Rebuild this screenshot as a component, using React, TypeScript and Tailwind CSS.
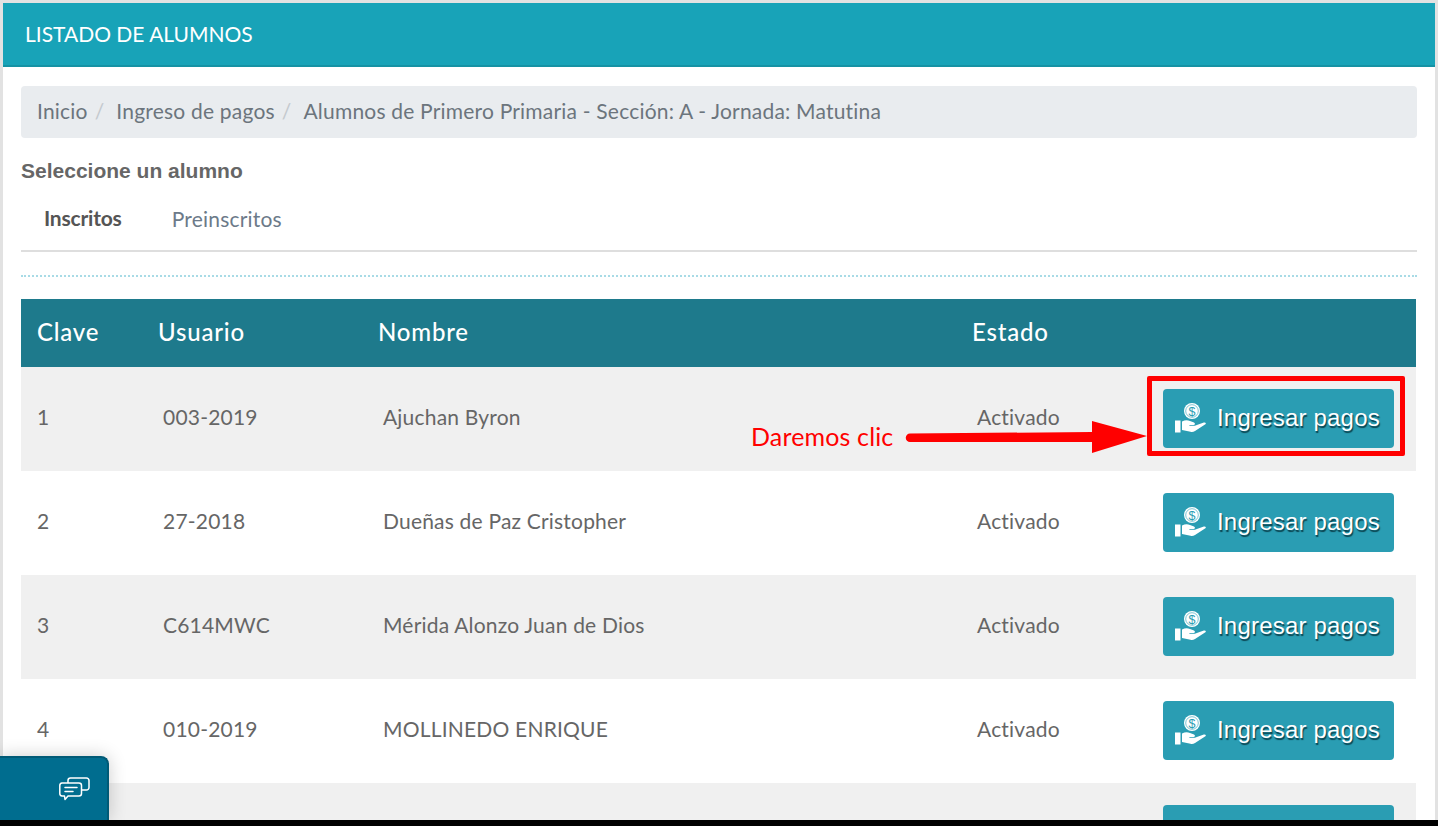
const rows = [
  { id: 1, user: "003-2019", name: "Ajuchan Byron", shaded: true },
  { id: 2, user: "27-2018", name: "Dueñas de Paz Cristopher", shaded: false },
  { id: 3, user: "C614MWC", name: "Mérida Alonzo Juan de Dios", shaded: true },
  { id: 4, user: "010-2019", name: "MOLLINEDO ENRIQUE", shaded: false },
  { id: 5, user: "", name: "", shaded: true },
]

function PayIcon() {
  return (
    <svg width="32" height="32" viewBox="0 0 32 32" className="shrink-0 [text-shadow:none]">
      <circle cx="17" cy="9" r="8" fill="#fff" />
      <circle cx="17" cy="9" r="6.300" fill="none" stroke="#2a9db3" strokeWidth="0.600" />
      <text x="17" y="13.500" textAnchor="middle" fontSize="12.500" fontFamily="Liberation Sans, sans-serif" fill="#2a9db3">$</text>
      <path d="M0 18.500h5.500v12H0z" fill="#fff" />
      <path d="M7 19.500c3-1.500 5.500-1.500 8-.5l4 1.500c1.500.6 1.200 2.500-.5 2.500h-4l-.2.8h5.500l9-3.300c2-.5 2.800 1 1.200 2l-10 6.500c-1.500 1-3 1.200-4.500.8L7 28z" fill="#fff" />
    </svg>
  )
}

function ChatIcon() {
  return (
    <svg width="32" height="28" viewBox="0 0 32 28" fill="none" stroke="#fff" strokeWidth="1.500" strokeLinejoin="round" strokeLinecap="round">
      <path d="M3 6h17a2.500 2.500 0 0 1 2.500 2.500v8a2.500 2.500 0 0 1-2.500 2.500H9l-3 3.500-.5-3.500H3A2.500 2.500 0 0 1 .800 16.500v-8A2.500 2.500 0 0 1 3 6z" />
      <path d="M9 5.500V3.500A2.500 2.500 0 0 1 11.500 1h16A2.500 2.500 0 0 1 30 3.500v7a2.500 2.500 0 0 1-2.500 2.500H23" />
      <path d="M6 10.500h12M6 14.500h8" />
    </svg>
  )
}

function PayButton({ label = true }: { label?: boolean }) {
  return (
    <button className="flex h-[59px] w-[231px] shrink-0 items-center gap-[10px] rounded-[4px] bg-[#2a9db3] pl-[12px] font-['Liberation_Sans',sans-serif] text-[24px] text-white [text-shadow:1px_2px_1px_#0b4450]">
      {label && <PayIcon />}
      {label && "Ingresar pagos"}
    </button>
  )
}

export default function App() {
  return (
    <div className="relative flex h-[826px] w-[1438px] flex-col overflow-hidden bg-[#e2e2e2] font-['Lato',sans-serif]">
      <div className="mx-[3px] mt-[3px] flex-1 overflow-hidden bg-white">
        <div className="flex h-[64px] items-center border-b-2 border-[#1592a4] bg-[#18a3b8] pl-[22px] text-[21px] text-white">
          LISTADO DE ALUMNOS
        </div>

        <div className="px-[18px] pt-[19px]">
          <div className="flex h-[52px] items-center rounded-[4px] bg-[#e9ecef] pb-[3px] pl-4 text-[21px] tracking-[0.2px] text-[#6c757d]">
            <span>Inicio</span>
            <span className="ml-[7px] text-[#c4c9ce]">/</span>
            <span className="ml-[12px]">Ingreso de pagos</span>
            <span className="ml-[7px] text-[#c4c9ce]">/</span>
            <span className="ml-[12px]">Alumnos de Primero Primaria - Sección: A - Jornada: Matutina</span>
          </div>

          <h2 className="mt-[21px] h-[24px] font-['Liberation_Sans',sans-serif] text-[21px] leading-[24px] font-bold text-[#666]">
            Seleccione un alumno
          </h2>

          <div className="flex h-[69px] items-start border-b-2 border-[#dedede] pl-[23px] pt-[19px] text-[21px]">
            <span className="font-bold tracking-[-0.2px] text-[#555]">Inscritos</span>
            <span className="ml-[50px] pt-[1px] tracking-[0.2px] text-[#6c7a89]">Preinscritos</span>
          </div>

          <div className="mt-[23px] border-t-2 border-dotted border-[#a8dbe6]" />

          <div className="mt-[22px] mr-px">
            <div className="grid h-[68px] grid-cols-[121px_220px_594px_1fr] items-center bg-[#1e7a8c] pb-[2px] text-[24px] font-medium tracking-[0.8px] text-white">
              <span className="pl-4">Clave</span>
              <span className="pl-4">Usuario</span>
              <span className="pl-4">Nombre</span>
              <span className="pl-4">Estado</span>
            </div>
            {rows.map((row) => (
              <div
                key={row.id}
                className={`grid h-[104px] grid-cols-[121px_220px_594px_1fr] items-center pb-[2px] text-[21px] tracking-[0.2px] text-[#666] ${row.shaded ? "bg-[#f0f0f0]" : "bg-white"}`}
              >
                {row.user ? (
                  <>
                    <span className="pb-[2px] pl-4">{row.id}</span>
                    <span className="pb-[2px] pl-[21px]">{row.user}</span>
                    <span className="pb-[2px] pl-[21px]">{row.name}</span>
                    <div className="flex items-center justify-between pl-[21px] pr-[22px]">
                      <span className="pb-[2px]">Activado</span>
                      <PayButton />
                    </div>
                  </>
                ) : (
                  <div className="col-start-4 flex justify-end pr-[22px]">
                    <PayButton label={false} />
                  </div>
                )}
              </div>
            ))}
          </div>
        </div>
      </div>
      <div className="h-[6px] shrink-0 bg-black" />

      {/* Red annotation over the first row */}
      <span className="absolute left-[751px] top-[421px] text-[25px] leading-[30px] tracking-[0.15px] text-[#f00]">Daremos clic</span>
      <svg width="244" height="36" viewBox="0 0 244 36" className="absolute left-[905px] top-[419px]">
        <path d="M5 14.500 187 13V2l55 15-55 17V23L5 23a4.200 4.200 0 0 1 0-8.500z" fill="#f00" />
      </svg>
      <div className="absolute left-[1147px] top-[376px] h-[80px] w-[258px] rounded-[2px] border-[5px] border-[#f00]" />

      {/* Chat tab */}
      <button className="absolute bottom-[6px] left-0 flex h-[64px] w-[109px] items-center justify-end rounded-tr-[8px] border-r-2 border-t-2 border-[#005a76] bg-[#006d8f] pr-[16px] pt-[3px] shadow-[0_0_18px_rgba(0,0,0,0.2)]">
        <ChatIcon />
      </button>
    </div>
  )
}
